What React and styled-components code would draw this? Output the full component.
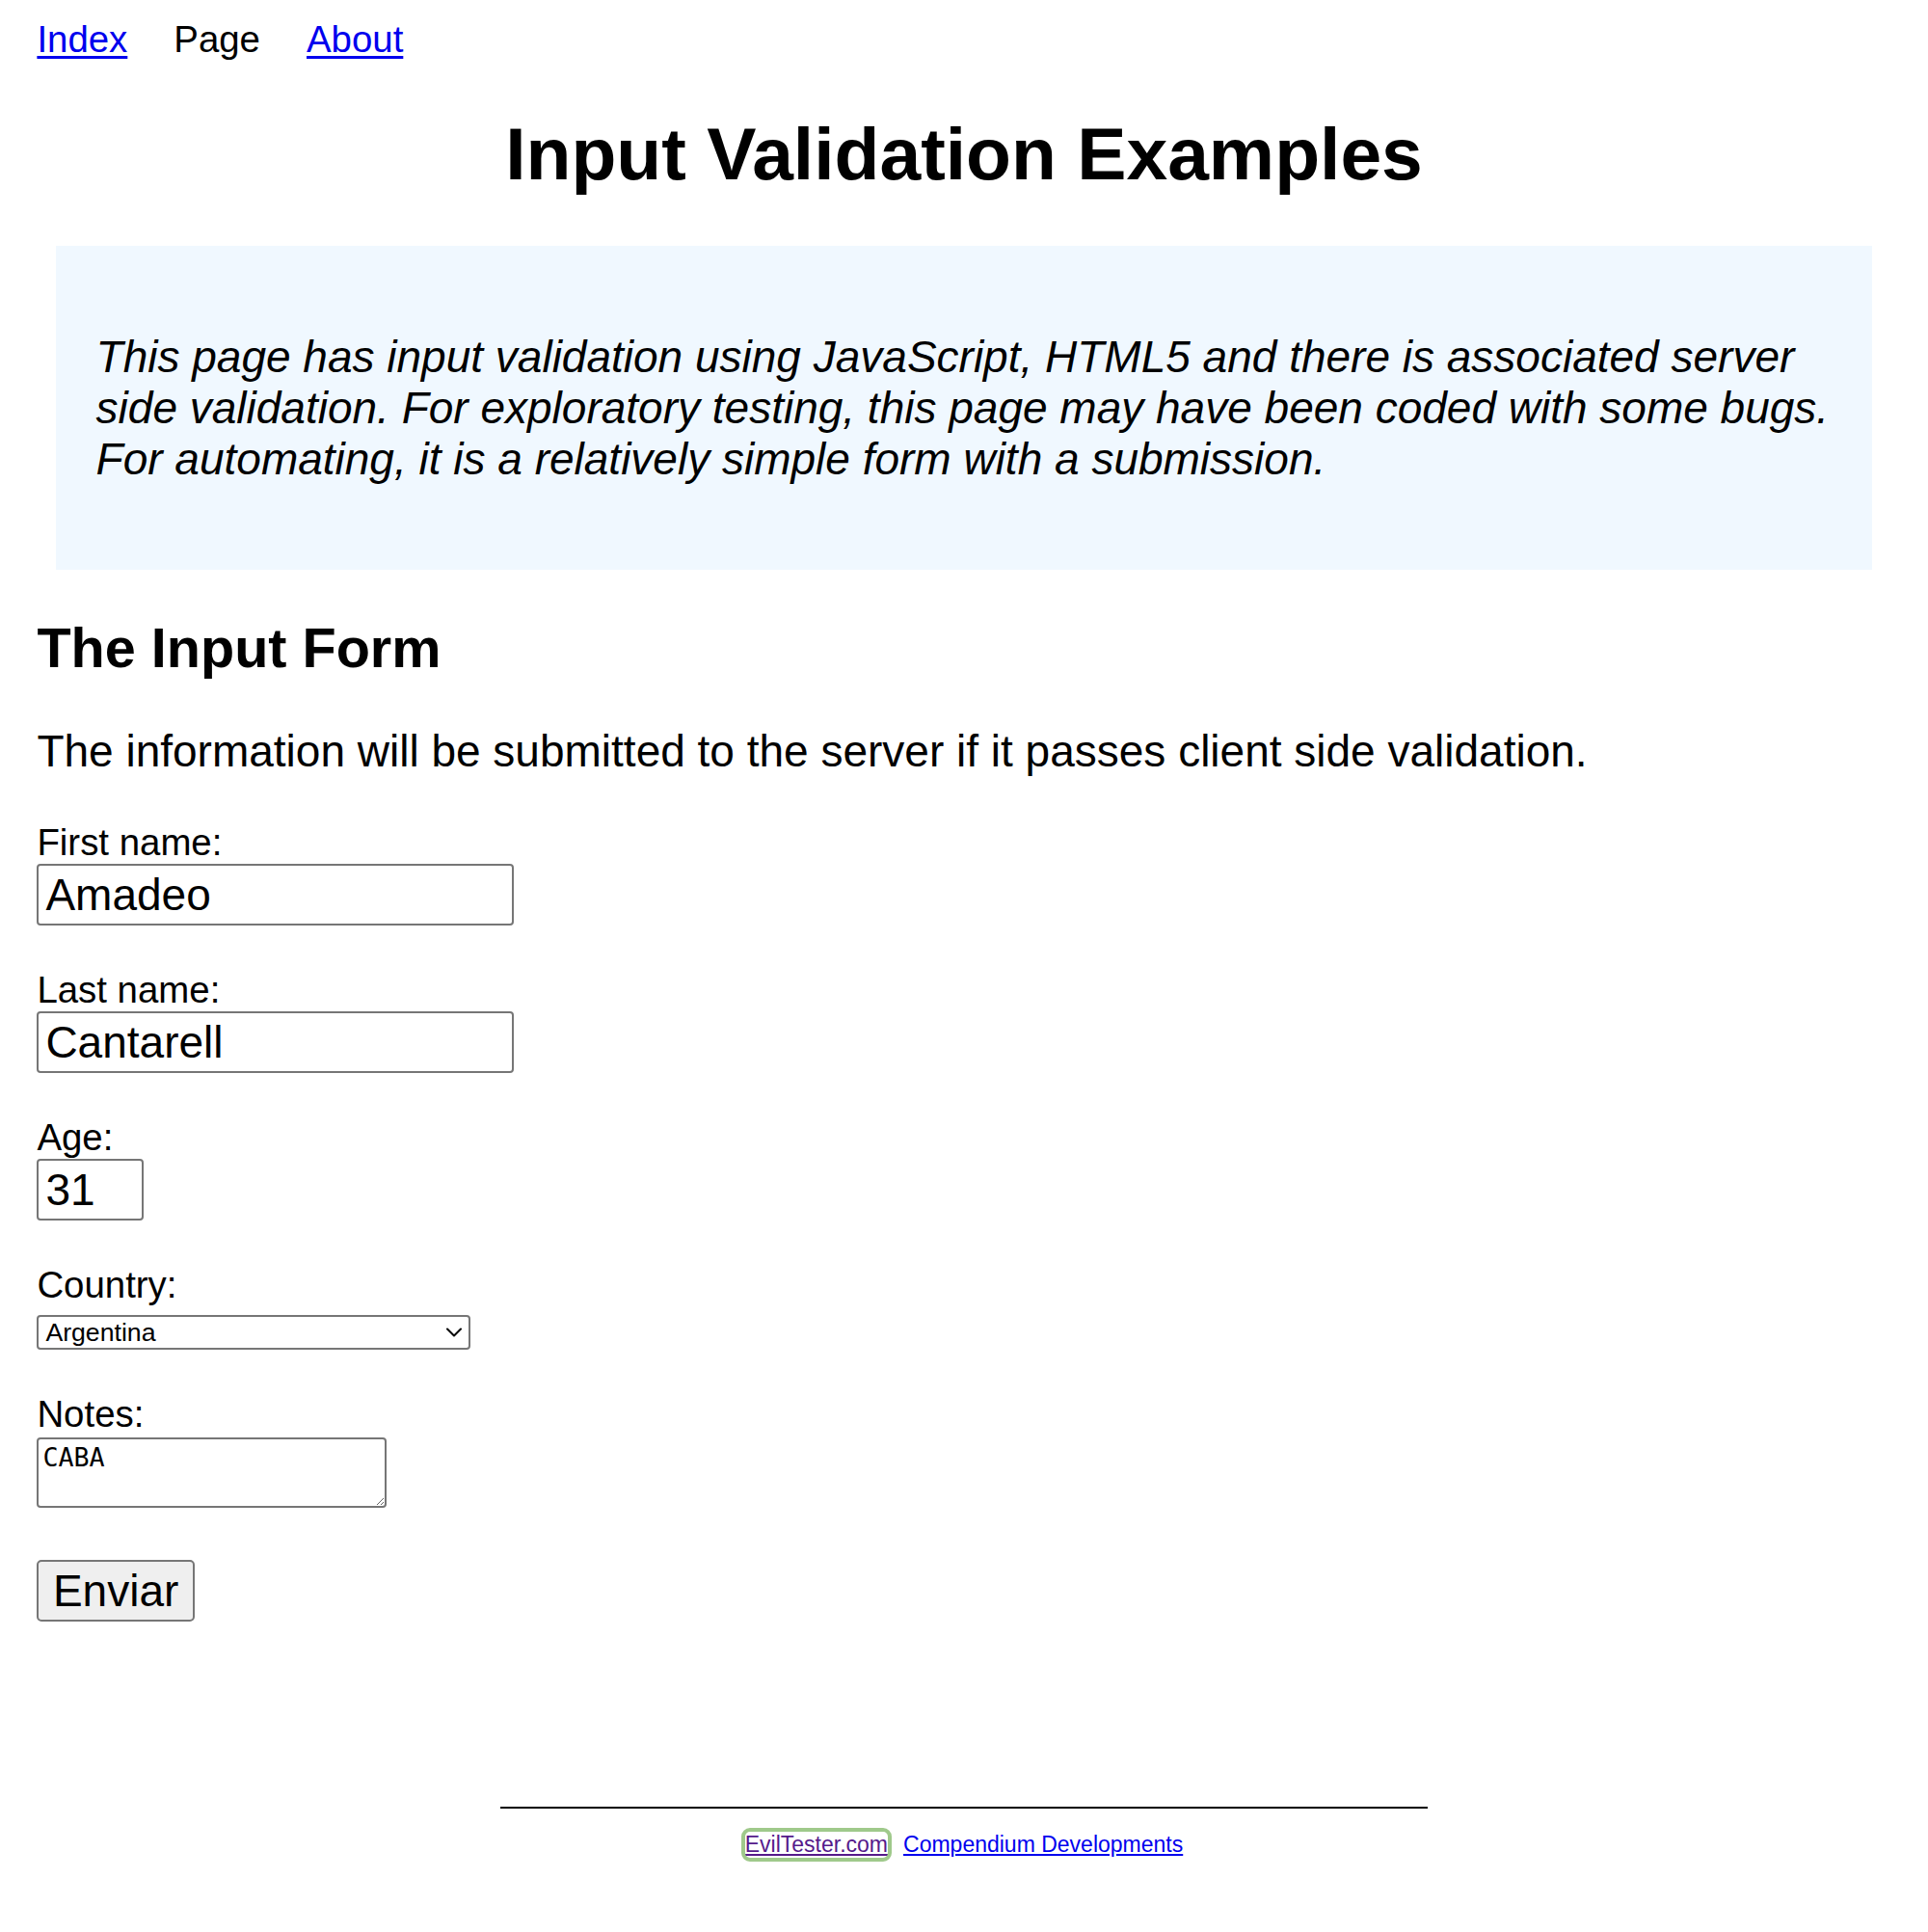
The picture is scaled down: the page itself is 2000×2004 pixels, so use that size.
import React from "react";
import styled, { createGlobalStyle } from "styled-components";

const Global = createGlobalStyle`
  html, body {
    margin: 0;
    padding: 0;
    background: #ffffff;
  }
  body {
    font-family: "Liberation Sans", Arial, Helvetica, sans-serif;
    color: #000000;
  }
`;

const Page = styled.div`
  padding: 19.2px 38.4px 40px;
  font-size: 38.4px;
  min-height: 1945px;
  box-sizing: border-box;
`;

const Nav = styled.nav`
  display: flex;
  gap: 48px;
  font-size: 38.4px;
  line-height: 44px;
`;

const NavLink = styled.a`
  color: #0000ee;
  text-decoration: underline;
  text-decoration-thickness: 3px;
  text-underline-offset: 4px;
`;

const NavCurrent = styled.span`
  color: #000;
`;

const Title = styled.h1`
  font-size: 76.8px;
  line-height: 88px;
  font-weight: 700;
  text-align: center;
  margin: 52px 0;
`;

const Intro = styled.div`
  background: #f0f8ff;
  margin: 0 19.2px;
  padding: 42.4px 30px 42.4px 42px;
`;

const IntroText = styled.p`
  font-size: 46px;
  line-height: 53px;
  font-style: italic;
  margin: 46px 0;
`;

const SectionTitle = styled.h2`
  font-size: 57.6px;
  line-height: 66px;
  font-weight: 700;
  margin: 48px 0;
`;

const Lead = styled.p`
  font-size: 46px;
  line-height: 53px;
  margin: 46px 0;
`;

const Form = styled.form`
  display: flex;
  flex-direction: column;
  align-items: flex-start;
  gap: 45px;
`;

const Field = styled.div`
  display: flex;
  flex-direction: column;
  align-items: flex-start;
`;

const Label = styled.label`
  display: block;
  font-size: 38.4px;
  line-height: 44px;
`;

const TextInput = styled.input`
  box-sizing: border-box;
  width: ${(p) => p.$w}px;
  height: 64px;
  margin: 0;
  padding: 2px 7px;
  font-family: "Liberation Sans", Arial, sans-serif;
  font-size: 46px;
  color: #000;
  border: 2px solid #767676;
  border-radius: 4px;
  background: #fff;
  outline: none;
`;

const SelectWrap = styled.div`
  position: relative;
  margin-top: 9px;
  width: 450px;
  height: 36px;
`;

const Select = styled.select`
  display: block;
  box-sizing: border-box;
  width: 450px;
  height: 36px;
  margin: 0;
  padding: 0 40px 0 7px;
  font-family: "Liberation Sans", Arial, sans-serif;
  font-size: 26.67px;
  color: #000;
  border: 2px solid #767676;
  border-radius: 4px;
  background: #fff;
  appearance: none;
  -webkit-appearance: none;
`;

const Chevron = styled.svg`
  position: absolute;
  right: 8px;
  top: 12px;
  width: 18px;
  height: 12px;
  pointer-events: none;
`;

const TextArea = styled.textarea`
  box-sizing: border-box;
  width: 363px;
  height: 73px;
  margin: 2px 0 0;
  padding: 4px 4px;
  font-family: "DejaVu Sans Mono", "Liberation Mono", monospace;
  font-size: 26.67px;
  line-height: 1.15;
  color: #000;
  border: 2px solid #767676;
  border-radius: 4px;
  background: #fff;
`;

const SubmitButton = styled.button`
  box-sizing: border-box;
  height: 64px;
  margin-top: 9px;
  padding: 0 14.5px;
  font-family: "Liberation Sans", Arial, sans-serif;
  font-size: 46px;
  color: #000;
  background: #efefef;
  border: 2px solid #767676;
  border-radius: 5px;
`;

const Footer = styled.footer`
  margin-top: 192px;
  display: flex;
  flex-direction: column;
  align-items: center;
`;

const Rule = styled.div`
  width: 50%;
  height: 2.4px;
  background: #000;
`;

const FooterLinks = styled.div`
  margin-top: 24px;
  display: flex;
  gap: 16px;
  font-size: 23px;
  line-height: 27px;
`;

const FooterLink = styled.a`
  color: ${(p) => (p.$visited ? "#551a8b" : "#0000ee")};
  text-decoration: underline;
  border-radius: 5px;
  ${(p) => (p.$focused ? "outline: 4px solid #9fc98b; outline-offset: 0px;" : "")}
`;

export default function App() {
  return (
    <>
      <Global />
      <Page>
        <Nav>
          <NavLink href="#">Index</NavLink>
          <NavCurrent>Page</NavCurrent>
          <NavLink href="#">About</NavLink>
        </Nav>
        <Title>Input Validation Examples</Title>
        <Intro>
          <IntroText>
            This page has input validation using JavaScript, HTML5 and there is
            associated server side validation. For exploratory testing, this page
            may have been coded with some bugs. For automating, it is a relatively
            simple form with a submission.
          </IntroText>
        </Intro>
        <SectionTitle>The Input Form</SectionTitle>
        <Lead>
          The information will be submitted to the server if it passes client side
          validation.
        </Lead>
        <Form onSubmit={(e) => e.preventDefault()}>
          <Field>
            <Label htmlFor="firstname">First name:</Label>
            <TextInput id="firstname" $w={495} defaultValue="Amadeo" />
          </Field>
          <Field>
            <Label htmlFor="surname">Last name:</Label>
            <TextInput id="surname" $w={495} defaultValue="Cantarell" />
          </Field>
          <Field>
            <Label htmlFor="age">Age:</Label>
            <TextInput id="age" $w={111} defaultValue="31" />
          </Field>
          <Field>
            <Label htmlFor="country">Country:</Label>
            <SelectWrap>
              <Select id="country" defaultValue="Argentina">
                <option>Argentina</option>
              </Select>
              <Chevron viewBox="0 0 18 12">
                <path
                  d="M2 2.5 L9 9.5 L16 2.5"
                  fill="none"
                  stroke="#000"
                  strokeWidth="2"
                  strokeLinecap="round"
                  strokeLinejoin="round"
                />
              </Chevron>
            </SelectWrap>
          </Field>
          <Field>
            <Label htmlFor="notes">Notes:</Label>
            <TextArea id="notes" defaultValue="CABA" />
          </Field>
          <SubmitButton type="submit">Enviar</SubmitButton>
        </Form>
        <Footer>
          <Rule />
          <FooterLinks>
            <FooterLink href="#" $visited $focused>
              EvilTester.com
            </FooterLink>
            <FooterLink href="#">Compendium Developments</FooterLink>
          </FooterLinks>
        </Footer>
      </Page>
    </>
  );
}
